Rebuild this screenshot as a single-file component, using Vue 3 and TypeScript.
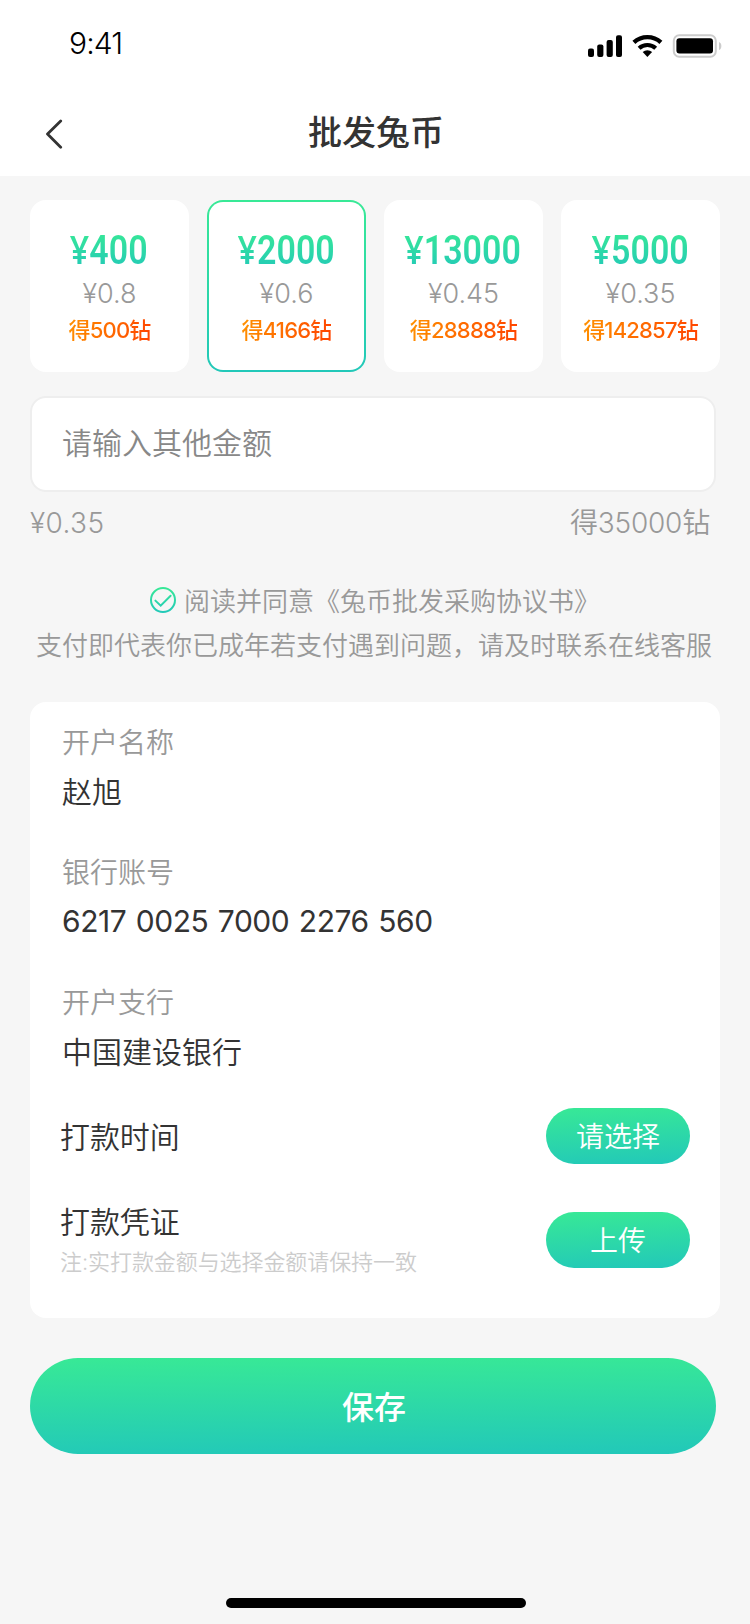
<script setup lang="ts">
import { ref } from 'vue'

interface Plan {
  price: number
  rate: string
  gain: number
}

interface Field {
  label: string
  value: string
  numeric?: boolean
}

const plans: Plan[] = [
  { price: 400, rate: '0.8', gain: 500 },
  { price: 2000, rate: '0.6', gain: 4166 },
  { price: 13000, rate: '0.45', gain: 28888 },
  { price: 5000, rate: '0.35', gain: 142857 },
]

const fields: Field[] = [
  { label: '开户名称', value: '赵旭' },
  { label: '银行账号', value: '6217 0025 7000 2276 560', numeric: true },
  { label: '开户支行', value: '中国建设银行' },
]

const selected = ref(1)
const amount = ref('')
</script>

<template>
  <div class="page">
    <header class="header">
      <div class="status">
        <span class="clock">9:41</span>
        <svg class="status-icons" width="136" height="28" viewBox="586 32 136 28">
          <rect x="588" y="48.6" width="6" height="8.4" rx="2" />
          <rect x="597.2" y="44.4" width="6.2" height="12.6" rx="2" />
          <rect x="606.6" y="40" width="6.2" height="17" rx="2" />
          <rect x="616" y="35.2" width="6" height="21.8" rx="2" />
          <path d="M633.9 42.3a20.2 20.2 0 0 1 27 0" fill="none" stroke="#000" stroke-width="4.4" />
          <path d="M639.1 48.2a12.4 12.4 0 0 1 16.6 0" fill="none" stroke="#000" stroke-width="4.2" />
          <path d="M642.7 52a7.2 7.2 0 0 1 9.4 0l-4.7 5z" />
          <rect x="673.8" y="35.3" width="42" height="21.4" rx="5.4" fill="none" stroke="#ccc" stroke-width="2" />
          <rect x="676.4" y="38.2" width="36.6" height="15.2" rx="3" />
          <path d="M719 42c3.2 1.2 3.2 6.6 0 8z" fill="#ccc" />
        </svg>
      </div>
      <div class="nav">
        <svg class="back" width="20" height="30" viewBox="0 0 20 30">
          <path d="M16.7 1.9 3.5 15l13.2 13.2" fill="none" stroke="#333" stroke-width="2.8" stroke-linecap="round" stroke-linejoin="round" />
        </svg>
        <h1 class="title">批发兔币</h1>
      </div>
    </header>

    <main class="content">
      <div class="plans">
        <div
          v-for="(plan, i) in plans"
          :key="plan.price"
          class="plan"
          :class="{ active: i === selected }"
          @click="selected = i"
        >
          <span class="price"><span class="yen">¥</span>{{ plan.price }}</span>
          <span class="rate">¥{{ plan.rate }}</span>
          <span class="gain">得{{ plan.gain }}钻</span>
        </div>
      </div>

      <input v-model="amount" class="amount" placeholder="请输入其他金额" />

      <div class="summary">
        <span class="unit">¥0.35</span>
        <span class="total">得35000钻</span>
      </div>

      <div class="terms">
        <div class="agree">
          <svg width="26" height="26" viewBox="0 0 26 26">
            <defs>
              <linearGradient id="ring" x1="0" y1="0" x2="0" y2="26" gradientUnits="userSpaceOnUse">
                <stop offset="0" stop-color="#38e996" />
                <stop offset="1" stop-color="#22c8b9" />
              </linearGradient>
            </defs>
            <g fill="none" stroke="url(#ring)" stroke-width="2">
              <circle cx="13" cy="13" r="12" />
              <path d="M5.4 13.6 10.7 18.7 20.6 8.8" stroke-linecap="round" />
            </g>
          </svg>
          <span>阅读并同意《兔币批发采购协议书》</span>
        </div>
        <p>支付即代表你已成年若支付遇到问题，请及时联系在线客服</p>
      </div>

      <section class="account">
        <div v-for="field in fields" :key="field.label" class="field">
          <span class="label">{{ field.label }}</span>
          <span class="value" :class="{ numeric: field.numeric }">{{ field.value }}</span>
        </div>
        <div class="action">
          <span class="name">打款时间</span>
          <button class="pill">请选择</button>
        </div>
        <div class="action second">
          <div class="proof">
            <span class="name">打款凭证</span>
            <span class="note">注:实打款金额与选择金额请保持一致</span>
          </div>
          <button class="pill">上传</button>
        </div>
      </section>

      <button class="save">保存</button>
    </main>

    <div class="home-bar"></div>
  </div>
</template>

<style>
body {
  margin: 0;
  background: #f6f6f6;
}
</style>

<style scoped>
.page {
  box-sizing: border-box;
  display: flex;
  flex-direction: column;
  width: 750px;
  height: 1624px;
  padding-bottom: 16px;
  background: #f6f6f6;
  color: #333;
  font-family: Inter, "Noto Sans CJK SC", sans-serif;
  font-weight: 350;
}

button,
input {
  box-sizing: border-box;
  margin: 0;
  padding: 0;
  border: 0;
  font-family: inherit;
  font-weight: inherit;
}

.header {
  height: 176px;
  background: #fff;
}

.status {
  display: flex;
  justify-content: space-between;
  height: 88px;
  padding: 0 28px 0 69px;
}

.clock {
  margin-top: 23px;
  color: #000;
  font-size: 30px;
  line-height: 40px;
  letter-spacing: -0.9px;
}

.status-icons {
  margin-top: 32px;
}

.nav {
  display: grid;
  grid-template-columns: 20px 1fr 20px;
  align-items: center;
  height: 88px;
  padding: 0 44px;
}

.back {
  margin-top: 4px;
}

.title {
  margin: 0;
  padding: 2px 0 0 2px;
  font-size: 34px;
  font-weight: 500;
  line-height: 48px;
  text-align: center;
}

.content {
  flex: 1;
  padding: 24px 30px 0;
}

.plans {
  display: grid;
  grid-template-columns: repeat(4, 159px);
  gap: 18px;
}

.plan {
  box-sizing: border-box;
  display: flex;
  flex-direction: column;
  align-items: center;
  height: 172px;
  padding-top: 24px;
  border: 2px solid transparent;
  border-radius: 16px;
  background: #fff;
}

.plan.active {
  background:
    linear-gradient(#fff, #fff) padding-box,
    linear-gradient(#38e996, #22c8b9) border-box;
}

.price {
  height: 45px;
  margin-left: -1px;
  font-family: Roboto, sans-serif;
  font-size: 40px;
  font-weight: 600;
  line-height: 45px;
  white-space: nowrap;
  transform: scaleX(0.85);
  background: linear-gradient(#38e996 10%, #22c8b9 100%);
  background-clip: text;
  color: transparent;
}

.yen {
  font-family: "Noto Sans", sans-serif;
}

.rate {
  margin-top: 4px;
  color: #999;
  font-size: 27px;
  line-height: 38px;
}

.gain {
  font-size: 22px;
  font-weight: 500;
  line-height: 34px;
  letter-spacing: -0.8px;
  background: linear-gradient(105deg, #ff9200, #ff4200);
  background-clip: text;
  color: transparent;
}

.amount {
  display: block;
  width: 686px;
  height: 96px;
  margin-top: 24px;
  padding: 0 30px 2px;
  border: 2px solid #eee;
  border-radius: 16px;
  background: #fff;
  color: #333;
  font-size: 30px;
}

.amount::placeholder {
  color: #888;
  opacity: 1;
}

.summary {
  display: flex;
  justify-content: space-between;
  margin-top: 11px;
  padding-right: 10px;
  color: #999;
  font-size: 28px;
  line-height: 40px;
}

.unit {
  letter-spacing: 0.4px;
}

.total {
  letter-spacing: -0.2px;
}

.terms {
  margin-top: 36px;
  color: #999;
  font-size: 26px;
  line-height: 44px;
  text-align: center;
}

.agree {
  display: flex;
  align-items: center;
  gap: 8px;
  padding-left: 120px;
}

.agree svg {
  margin-top: -3px;
}

.agree span {
  padding-top: 1px;
}

.terms p {
  width: 688px;
  margin: 0;
  white-space: nowrap;
}

.account {
  box-sizing: border-box;
  height: 616px;
  margin-top: 34px;
  padding: 17px 30px 0 32px;
  border-radius: 16px;
  background: #fff;
}

.field {
  display: flex;
  flex-direction: column;
  height: 130px;
}

.label {
  color: #999;
  font-size: 28px;
  line-height: 48px;
}

.value {
  font-size: 30px;
  line-height: 51px;
}

.value.numeric {
  font-weight: 400;
  line-height: 49px;
  letter-spacing: -0.45px;
  word-spacing: 1.5px;
}

.action {
  display: flex;
  justify-content: space-between;
  align-items: center;
  height: 56px;
  margin-top: -1px;
  margin-left: -2px;
}

.action.second {
  height: 80px;
  margin-top: 36px;
}

.name {
  padding-top: 2px;
  font-size: 30px;
  line-height: 42px;
  letter-spacing: -0.1px;
}

.proof {
  display: flex;
  flex-direction: column;
}

.note {
  color: #ccc;
  font-size: 22px;
  line-height: 38px;
  letter-spacing: -0.08px;
}

.pill {
  width: 144px;
  height: 56px;
  padding-top: 2px;
  border-radius: 28px;
  background: linear-gradient(177deg, #38e996, #22c8b9);
  color: #fff;
  font-size: 28px;
  line-height: 54px;
}

.save {
  display: block;
  width: 686px;
  height: 96px;
  margin-top: 40px;
  padding: 0 0 2px 2px;
  border-radius: 48px;
  background: linear-gradient(179.4deg, #38e996, #22c8b9);
  color: #fff;
  font-size: 32px;
  font-weight: 500;
}

.home-bar {
  width: 300px;
  height: 10px;
  margin-left: 226px;
  border-radius: 5px;
  background: #000;
}
</style>
